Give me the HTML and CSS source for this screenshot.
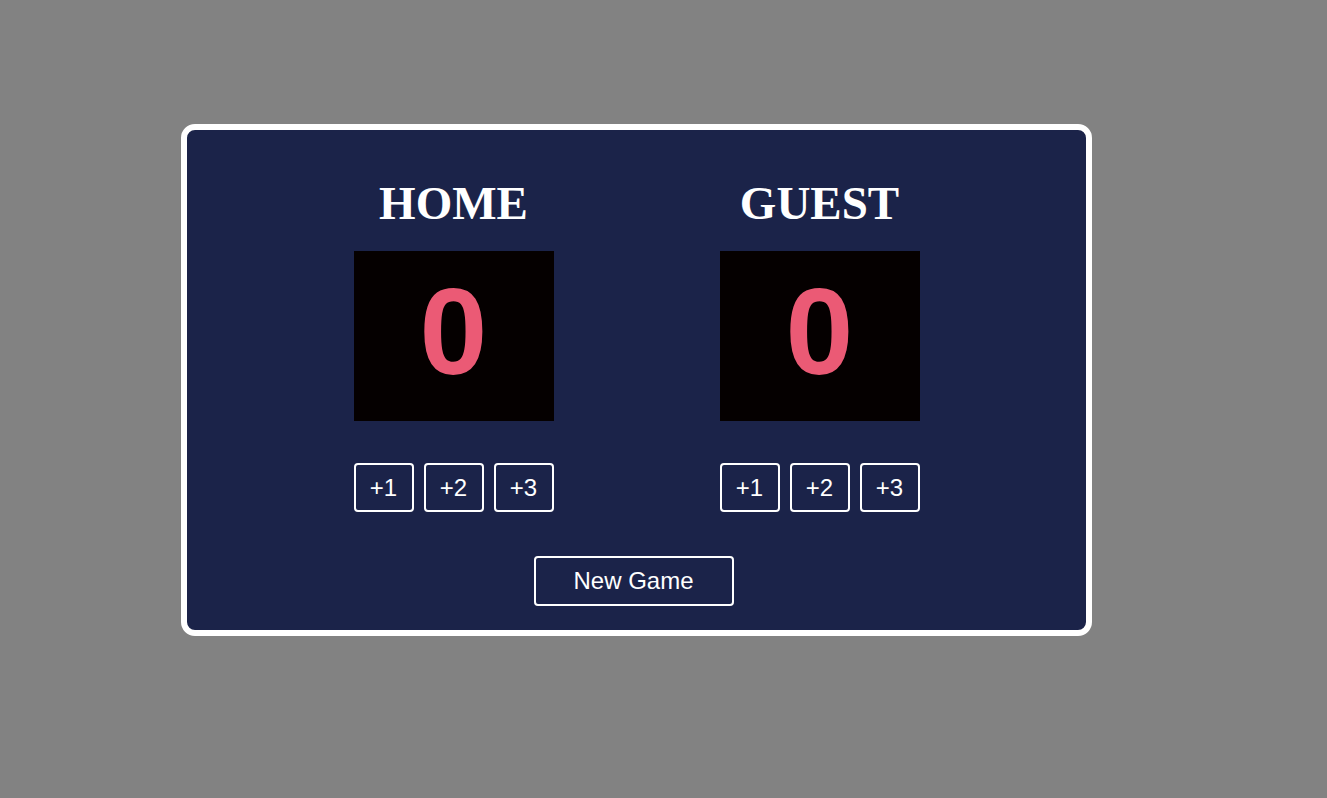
FILE: index.html
```html
<!DOCTYPE html>
<html>
<head>
<meta charset="utf-8">
<link rel="stylesheet" href="styles.css">
</head>
<body>
<div class="card">
  <div class="teams">
    <div class="team">
      <h2 class="team-name">HOME</h2>
      <div class="score"><span class="score-num">0</span></div>
      <div class="buttons">
        <button class="btn">+1</button>
        <button class="btn">+2</button>
        <button class="btn">+3</button>
      </div>
    </div>
    <div class="team">
      <h2 class="team-name">GUEST</h2>
      <div class="score"><span class="score-num">0</span></div>
      <div class="buttons">
        <button class="btn">+1</button>
        <button class="btn">+2</button>
        <button class="btn">+3</button>
      </div>
    </div>
  </div>
  <div class="footer">
    <button class="btn new-game">New Game</button>
  </div>
</div>
</body>
</html>
```
FILE: styles.css
```css
html, body {
  margin: 0;
  padding: 0;
  background: #828282;
  height: 100%;
}
body {
  font-family: "Liberation Sans", Arial, sans-serif;
}
.card {
  box-sizing: border-box;
  width: 911px;
  height: 512px;
  margin: 124px 0 0 181px;
  background: #1b2349;
  border: 6px solid #ffffff;
  border-radius: 14px;
  padding-top: 46px;
  display: flex;
  flex-direction: column;
  align-items: center;
}
.teams {
  display: flex;
  gap: 166px;
}
.team {
  width: 200px;
  display: flex;
  flex-direction: column;
  align-items: center;
}
.team-name {
  margin: 0 0 20px;
  font-family: "Liberation Serif", "Times New Roman", serif;
  font-weight: bold;
  font-size: 47px;
  line-height: 55px;
  color: #ffffff;
}
.score {
  width: 200px;
  height: 170px;
  background: #050000;
  display: flex;
  align-items: center;
  justify-content: center;
}
.score-num {
  font-family: "Liberation Sans", Arial, sans-serif;
  font-weight: bold;
  font-size: 122px;
  line-height: 1;
  color: #eb5a75;
  padding-bottom: 8px;
}
.buttons {
  margin-top: 42px;
  display: flex;
  gap: 10px;
}
.btn {
  box-sizing: border-box;
  width: 60px;
  height: 49px;
  padding: 0;
  background: transparent;
  border: 2px solid #ffffff;
  border-radius: 4px;
  color: #ffffff;
  font-family: "Liberation Sans", Arial, sans-serif;
  font-size: 24px;
}
.footer {
  margin-top: 44px;
  margin-right: 6px;
}
.new-game {
  width: 200px;
  height: 50px;
}
```
